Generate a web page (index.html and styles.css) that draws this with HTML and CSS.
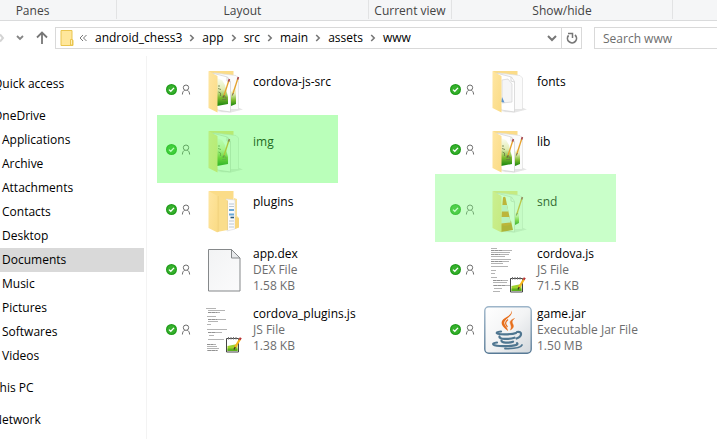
FILE: index.html
```html
<!DOCTYPE html>
<html lang="en">
<head>
<meta charset="utf-8">
<title>www</title>
<link rel="stylesheet" href="styles.css">
</head>
<body>
<svg class="defs" aria-hidden="true">
  <defs>
    <linearGradient id="flap" x1="0" x2="1" y1="0" y2="1"><stop offset="0" stop-color="#ffe6a2"/><stop offset="1" stop-color="#fadb85"/></linearGradient>
    <linearGradient id="picture" x1="0" x2="0" y1="0" y2="1"><stop offset="0" stop-color="#fbfdf2"/><stop offset=".4" stop-color="#e2edb4"/><stop offset=".7" stop-color="#7dbb30"/><stop offset="1" stop-color="#17850b"/></linearGradient>
    <linearGradient id="sheet" x1="0" x2="1" y1="0" y2="1"><stop offset="0" stop-color="#f2f3f4"/><stop offset="1" stop-color="#fbfbfc"/></linearGradient>
    <linearGradient id="tile" x1="0" x2="1" y1="0" y2="1"><stop offset="0" stop-color="#ffffff"/><stop offset=".5" stop-color="#f3f4f5"/><stop offset="1" stop-color="#d3d8dc"/></linearGradient>
    <linearGradient id="tile-edge" x1="0" x2="0" y1="0" y2="1"><stop offset="0" stop-color="#9db5c9"/><stop offset="1" stop-color="#587a96"/></linearGradient>
    <symbol id="synced" viewBox="0 0 12 12">
      <circle cx="6.500" cy="5.500" r="5.500" fill="#1f9d1a"/><circle cx="6.500" cy="5.500" r="4.300" fill="#36b02c"/>
      <path d="M4 5.600l1.800 1.700L9 3.900" fill="none" stroke="#fff" stroke-width="1.300"/>
    </symbol>
    <symbol id="person" viewBox="0 0 10 12">
      <circle cx="5" cy="3.700" r="2.700" fill="none" stroke="#6e6e6e"/>
      <path d="M1.400 10.500c0-2.400 1.200-3.800 2.300-4.300M8.600 10.500c0-2.400-1.200-3.800-2.300-4.300" fill="none" stroke="#6e6e6e"/>
    </symbol>
    <symbol id="crumb-arrow" viewBox="0 0 6 8"><path d="M1.200 1l3 3-3 3" fill="none" stroke="#777" stroke-width="1.600"/></symbol>
    <symbol id="folder-back" viewBox="0 0 48 48"><path d="M9 5h24.500v34H17z" fill="#fbdc88"/><path d="M17 46l14 .5 12-3-5-2z" fill="#e6e6e6"/></symbol>
    <symbol id="folder-flap" viewBox="0 0 48 48"><path d="M8.500 5L17.500 10V46.500L8.500 42z" fill="url(#flap)"/></symbol>
    <symbol id="pages" viewBox="0 0 48 48">
      <path d="M14 7l22 2.500 2.500 2.500v31.500H20z" fill="#fbfbfb" stroke="#dedede" stroke-width=".7"/>
      <path d="M12 7l15.500 4 3 4.500v30.500L17 44z" fill="#fff" stroke="#d4d4d4" stroke-width=".8"/>
      <path d="M27 11v4l3.500 1" fill="none" stroke="#c8c8c8" stroke-width=".7"/>
    </symbol>
    <symbol id="pencil" viewBox="0 0 10 22">
      <path d="M8 2L3 17.500" stroke="#e5a22c" stroke-width="1.300"/><path d="M8.400 1l-.8 2.400" stroke="#a84a55" stroke-width="1.700"/><path d="M3.200 17l-.8 2.500" stroke="#6d5333" stroke-width=".9"/>
    </symbol>
    <symbol id="folder-pictures" viewBox="0 0 48 48">
      <use href="#folder-back"/><use href="#pages"/>
      <path d="M31 26l5-6v18l-5 2z" fill="url(#picture)"/>
      <path d="M17 12l5 2 3 5 3 12v7l-11 2z" fill="url(#picture)"/>
      <path d="M18 20h2M18 22.500l3 1M18.500 26l2 1v3M22 31h4v2.500h-4" stroke="#6b7a45" stroke-width=".8" fill="none"/>
      <use href="#pencil" x="21" y="12" width="10" height="22"/>
      <use href="#pencil" x="30" y="10" width="10" height="22"/>
      <use href="#folder-flap"/>
    </symbol>
    <symbol id="folder-image" viewBox="0 0 48 48">
      <use href="#folder-back"/><use href="#pages"/>
      <path d="M17 12l5 2 3 5 3 12v7l-11 2z" fill="url(#picture)"/>
      <path d="M18 20h2M18 22.500l3 1M18.500 26l2 1v3M22 31h4v2.500h-4" stroke="#6b7a45" stroke-width=".8" fill="none"/>
      <use href="#pencil" x="21" y="12" width="10" height="22"/>
      <use href="#folder-flap"/>
    </symbol>
    <symbol id="folder-fonts" viewBox="0 0 48 48">
      <use href="#folder-back"/><use href="#pages"/>
      <path d="M18 14l6-1 4 5v18l-10 1z" fill="#f5f5f6" stroke="#d2d2d2" stroke-width=".7"/>
      <path d="M17 36l1-5 2.500 5.500z" fill="#5b93cf"/>
      <use href="#folder-flap"/>
    </symbol>
    <symbol id="folder-plugins" viewBox="0 0 48 48">
      <path d="M9 5h24.500v34H17z" fill="#fbdc88"/>
      <path d="M34 12l3 1v17l2 2v9l-4 2z" fill="#fbe096"/>
      <path d="M26 13l9 1v29l-8 2z" fill="#fbfbfb" stroke="#d9d9d9" stroke-width=".6"/>
      <path d="M29 18h5M29 20.500h5M29 35h5M29 38h5M29 41h5" stroke="#b3c1ce" stroke-width=".9"/>
      <path d="M29 24h5M29 28.500h5" stroke="#6aa9d8" stroke-width="1.800"/>
      <path d="M30.500 31.500h3.500" stroke="#25577d" stroke-width="1.600"/>
      <path d="M12 6l15.500 8.500v29.500L17 46z" fill="#fadd8b"/>
      <path d="M27.500 14.500v29.500M18 10v36" stroke="#e5c36c" stroke-width=".6"/>
      <path d="M36 31l3 1.500v9l-4 1.500V31z" fill="#f8d67c"/>
      <use href="#folder-flap"/>
    </symbol>
    <symbol id="folder-sounds" viewBox="0 0 48 48">
      <use href="#folder-back"/><use href="#pages"/>
      <path d="M31 28l4-4v13l-4 2z" fill="url(#picture)"/>
      <use href="#pencil" x="30" y="10" width="10" height="22"/>
      <path d="M16 37l11-2 2 9-12 2z" fill="#d0830f"/>
      <path d="M19 11.500q1.200-1.500 2.500 0L27 38q-4 3-10.500 1z" fill="#ea8412"/>
      <path d="M17.500 19h5.500l1.500 6.500h-7zM16.500 31h9l1.300 5.500-10 1z" fill="#e3e9ec"/>
      <use href="#folder-flap"/>
    </symbol>
    <symbol id="blank-file" viewBox="0 0 48 48">
      <path d="M8.500 3.500h23l8.500 8.500v33H8.500z" fill="url(#sheet)" stroke="#85888a"/>
      <path d="M31.500 3.500V12H40z" fill="#e8eaec" stroke="#85888a"/>
    </symbol>
    <symbol id="notepad" viewBox="0 0 18 18">
      <path d="M2.500 2.500h12v13.500h-12z" fill="#fff" stroke="#444"/>
      <path d="M3.500 10l10-2v7h-10z" fill="#9ed22d"/><path d="M3.500 12.500h10V15h-10z" fill="#5db01d"/>
      <path d="M4.500 1v2.500M7 1v2.500M9.500 1v2.500M12 1v2.500" stroke="#777"/>
      <path d="M15.800 3.500L11 11.500" stroke="#f5b51b" stroke-width="2.200"/><path d="M16.800 1.800l-1.200 2" stroke="#b93131" stroke-width="2.200"/><path d="M11.200 11L10 13.500" stroke="#423321" stroke-width="1.300"/>
    </symbol>
    <symbol id="script-long" viewBox="0 0 48 48">
      <path d="M7 2.500h6M7 4.500h21M7 6.500h19M7 8.500h18M7 10.500h14M7 13.500h20M7 15.500h18M7 17.500h12M7 20.500h17M7 24.500h5M7 27.500h4M7 31.500h6M9 34.500h15M9 36.500h14M9 39.500h17M10 42.500h8M9 45.500h7" stroke="#b4b4b4" stroke-width="1.100"/>
      <path d="M7 4.500h12M7 8.500h9M7 15.500h11M9 34.500h9M10 39.500h12" stroke="#8f8f8f" stroke-width=".9" stroke-dasharray="3 1"/>
      <use href="#notepad" x="24" y="30" width="18" height="18"/>
    </symbol>
    <symbol id="script-short" viewBox="0 0 48 48">
      <path d="M6 2.500h10M8 4.500h17M8 6.500h12M7 10.500h9M8 13.500h18M8 15.500h10M7 18.500h4M7 23.500h20M8 26.500h14M9 29.500h5M8 33.500h16M7 38.500h9M7 40.500h10M7 42.500h12M7 44.500h11" stroke="#b4b4b4" stroke-width="1.100"/>
      <path d="M8 6.500h9M8 13.500h9M8 26.500h7M7 38.500h6M8 44.500h9" stroke="#8f8f8f" stroke-width=".9" stroke-dasharray="3 1"/>
      <use href="#notepad" x="24" y="30" width="18" height="18"/>
    </symbol>
    <symbol id="java" viewBox="0 0 48 48">
      <rect x=".8" y=".8" width="46.400" height="46.400" rx="4" fill="url(#tile)" stroke="url(#tile-edge)" stroke-width="1.400"/>
      <path d="M27.500 4.500c2.500 5.500-7.500 8-7.200 12.500.3 3 3.500 4.500 3.700 8-4-3-7.500-6-6-10C19.500 11.300 28 10 27.500 4.500z" fill="#e76f1c"/>
      <path d="M30.500 12.500c-3.500 1.300-5 2.800-4.200 5 .6 1.500 1.700 3.500.2 6.500 4.500-3 2.700-5 1.800-7-.7-1.700.4-3 2.200-4.500z" fill="#e76f1c" stroke="#e76f1c" stroke-width=".5"/>
      <path d="M24 13.500c-3 2.500-3.300 4.500-.5 7.500" fill="none" stroke="#e76f1c" stroke-width="1.200"/>
      <g fill="none" stroke="#4f7690" stroke-width="2.200" stroke-linecap="round">
        <path d="M17 25.500c-4 .5-5.500 1.400-3 2.200 4 1.200 14.500.7 18-.8"/>
        <path d="M33 26c5.500-1.200 5.500 4.500-.5 6.500"/>
        <path d="M15.500 30.500c-1 3 10 3 15 1.200"/>
        <path d="M17.500 34.500c-.5 2.500 7.500 2.700 11.500 1.200"/>
        <path d="M13 36.500c-6.500 1-5 3.200 6.500 3.600 8.500.2 16-1 13.500-3"/>
        <path d="M38 39c-1 2.700-9 3.700-17 3.500" stroke-width="1.800"/>
      </g>
    </symbol>
  </defs>
</svg>

<header>
  <div class="ribbon">
    <span>Panes</span><span>Layout</span><span>Current view</span><span>Show/hide</span><span></span>
  </div>
  <div class="toolbar">
    <nav class="history" aria-label="History">
      <button class="forward" aria-label="Forward"><svg width="5" height="10" viewBox="0 0 5 10"><path d="M0 1.500L3 5 0 8.500" fill="none" stroke="#d4d4d4" stroke-width="2"/></svg></button>
      <button class="recent" aria-label="Recent locations"><svg width="8" height="6" viewBox="0 0 8 6"><path d="M1 1l3 3 3-3" fill="none" stroke="#858585" stroke-width="1.800"/></svg></button>
      <button class="up" aria-label="Up"><svg width="14" height="14" viewBox="0 0 14 14"><path d="M7 13V2M2 6.500l5-5 5 5" fill="none" stroke="#777" stroke-width="1.800"/></svg></button>
    </nav>
    <div class="address">
      <svg class="place" width="14" height="18" viewBox="0 0 14 18"><path d="M1 1.500h11v9l1 1v5H1z" fill="#ffe79b" stroke="#eac54f"/><path d="M10.500 16v-5.500h2V16z" fill="#fff0b8" stroke="#eac54f"/></svg>
      <button class="earlier" aria-label="Earlier folders"><svg width="8" height="8" viewBox="0 0 8 8"><path d="M4 1L1 4l3 3M7.500 1l-3 3 3 3" fill="none" stroke="#777"/></svg></button>
      <nav class="crumbs" aria-label="Path">
        <a href="#">android_chess3</a><svg><use href="#crumb-arrow"/></svg>
        <a href="#">app</a><svg><use href="#crumb-arrow"/></svg>
        <a href="#">src</a><svg><use href="#crumb-arrow"/></svg>
        <a href="#">main</a><svg><use href="#crumb-arrow"/></svg>
        <a href="#">assets</a><svg><use href="#crumb-arrow"/></svg>
        <a href="#">www</a>
      </nav>
      <button class="drop" aria-label="Previous locations"><svg width="10" height="7" viewBox="0 0 10 7"><path d="M1 1l4 4 4-4" fill="none" stroke="#777" stroke-width="2"/></svg></button>
      <button class="refresh" aria-label="Refresh"><svg width="12" height="12" viewBox="0 0 12 12"><path d="M2.600 3.400A4.500 4.500 0 1 0 9 3" fill="none" stroke="#777" stroke-width="1.700"/><path d="M2 1.500h4.500V6" fill="none" stroke="#777" stroke-width="1.500"/></svg></button>
    </div>
    <input class="search" type="search" placeholder="Search www" aria-label="Search www">
  </div>
</header>

<div class="window">
  <nav class="tree" aria-label="Folders">
    <a class="root" href="#">Quick access</a>
    <a class="root" href="#">OneDrive</a>
    <a href="#">Applications</a>
    <a href="#">Archive</a>
    <a href="#">Attachments</a>
    <a href="#">Contacts</a>
    <a href="#">Desktop</a>
    <a class="current" href="#">Documents</a>
    <a href="#">Music</a>
    <a href="#">Pictures</a>
    <a href="#">Softwares</a>
    <a href="#">Videos</a>
    <a class="root" href="#">This PC</a>
    <a class="root" href="#">Network</a>
  </nav>
  <main>
    <ul class="files">
      <li><svg class="synced"><use href="#synced"/></svg><svg class="person"><use href="#person"/></svg><svg class="thumb"><use href="#folder-pictures"/></svg><div class="info"><span>cordova-js-src</span></div></li>
      <li><svg class="synced"><use href="#synced"/></svg><svg class="person"><use href="#person"/></svg><svg class="thumb"><use href="#folder-fonts"/></svg><div class="info"><span>fonts</span></div></li>
      <li class="mark mark-strong"><svg class="synced"><use href="#synced"/></svg><svg class="person"><use href="#person"/></svg><svg class="thumb"><use href="#folder-image"/></svg><div class="info"><span>img</span></div></li>
      <li><svg class="synced"><use href="#synced"/></svg><svg class="person"><use href="#person"/></svg><svg class="thumb"><use href="#folder-pictures"/></svg><div class="info"><span>lib</span></div></li>
      <li><svg class="synced"><use href="#synced"/></svg><svg class="person"><use href="#person"/></svg><svg class="thumb"><use href="#folder-plugins"/></svg><div class="info"><span>plugins</span></div></li>
      <li class="mark mark-soft"><svg class="synced"><use href="#synced"/></svg><svg class="person"><use href="#person"/></svg><svg class="thumb"><use href="#folder-sounds"/></svg><div class="info"><span>snd</span></div></li>
      <li><svg class="synced"><use href="#synced"/></svg><svg class="person"><use href="#person"/></svg><svg class="thumb"><use href="#blank-file"/></svg><div class="info"><span>app.dex</span><small>DEX File</small><small>1.58 KB</small></div></li>
      <li><svg class="synced"><use href="#synced"/></svg><svg class="person"><use href="#person"/></svg><svg class="thumb"><use href="#script-long"/></svg><div class="info"><span>cordova.js</span><small>JS File</small><small>71.5 KB</small></div></li>
      <li><svg class="synced"><use href="#synced"/></svg><svg class="person"><use href="#person"/></svg><svg class="thumb"><use href="#script-short"/></svg><div class="info"><span>cordova_plugins.js</span><small>JS File</small><small>1.38 KB</small></div></li>
      <li><svg class="synced"><use href="#synced"/></svg><svg class="person"><use href="#person"/></svg><svg class="thumb"><use href="#java"/></svg><div class="info"><span>game.jar</span><small>Executable Jar File</small><small>1.50 MB</small></div></li>
    </ul>
  </main>
</div>
</body>
</html>
```
FILE: styles.css
```css
* { box-sizing: border-box; }

body {
  margin: 0;
  min-height: 100vh;
  display: flex;
  flex-direction: column;
  overflow-x: hidden;
  background: #fff;
  color: #000;
  font: 12px/16px "Open Sans", "Noto Sans", sans-serif;
}

svg { display: block; flex: none; }
.defs { position: absolute; width: 0; height: 0; }
a { color: inherit; text-decoration: none; }
button { margin: 0; padding: 0; border: 0; background: none; display: grid; place-items: center; }

/* Ribbon group captions */
.ribbon {
  display: grid;
  grid-template-columns: 168px 252px 83px 221px 1fr;
  height: 21px;
  margin-left: -51px;
  padding-bottom: 3px;
  background: #f5f6f7;
  border-bottom: 1px solid #dadbdc;
  color: #444;
  text-align: center;
}
.ribbon span { padding-top: 3px; border-right: 1px solid #e2e3e4; white-space: nowrap; }
.ribbon span:last-child { border: 0; }

/* Address row */
.toolbar { display: flex; padding: 6px 0 7px; }
.history { display: flex; align-items: center; width: 55px; }
.forward { width: 5px; }
.recent { width: 30px; }
.up { width: 14px; }
.address { flex: 1; display: flex; align-items: center; height: 22px; padding-left: 4px; border: 1px solid #d9d9d9; }
.earlier { width: 8px; margin: 0 8px 0 5px; }
.crumbs { flex: 1; display: flex; align-items: center; gap: 7px; }
.crumbs svg { width: 6px; height: 8px; }
.drop { width: 18px; }
.refresh { width: 20px; height: 20px; border-left: 1px solid #d9d9d9; }
.search {
  width: 123px;
  height: 22px;
  margin-left: 12px;
  padding: 0 8px;
  border: 1px solid #d9d9d9;
  border-right: 0;
  border-radius: 0;
  font: inherit;
  appearance: none;
}
.search::placeholder { color: #6d6d6d; opacity: 1; }

/* Folder tree */
.window { flex: 1; display: flex; }
.tree { width: 147px; padding: 8px 2px 0 0; border-right: 1px solid #f3f3f3; }
.tree a { display: block; height: 24px; padding-left: 2px; line-height: 24px; }
.tree .root { margin-top: 8px; padding: 0; text-indent: -7px; overflow: hidden; }
.tree .current { background: #d9d9d9; }

/* File tiles */
main { flex: 1; padding: 4px 0 0 18px; }
.files {
  display: grid;
  grid-template-columns: repeat(auto-fill, 264px);
  grid-auto-rows: 60px;
  column-gap: 20px;
  margin: 0;
  padding: 0;
  list-style: none;
}
.files li { position: relative; display: flex; align-items: center; }
.synced { width: 12px; height: 12px; }
.person { width: 10px; height: 12px; margin: 0 9px 0 4px; }
.thumb { width: 48px; height: 48px; }
.info { min-height: 32px; margin-left: 5px; }
.info span, .info small { display: block; font-size: 12px; }
.info small { color: #6d6d6d; }

/* Translucent marker laid over a tile */
.mark::after { content: ""; position: absolute; width: 181px; height: 68px; }
.mark-strong::after { top: -5px; left: -8px; background: rgb(82 255 82 / .4); }
.mark-soft::after { top: -6px; left: -14px; background: rgb(120 255 120 / .4); }
```
